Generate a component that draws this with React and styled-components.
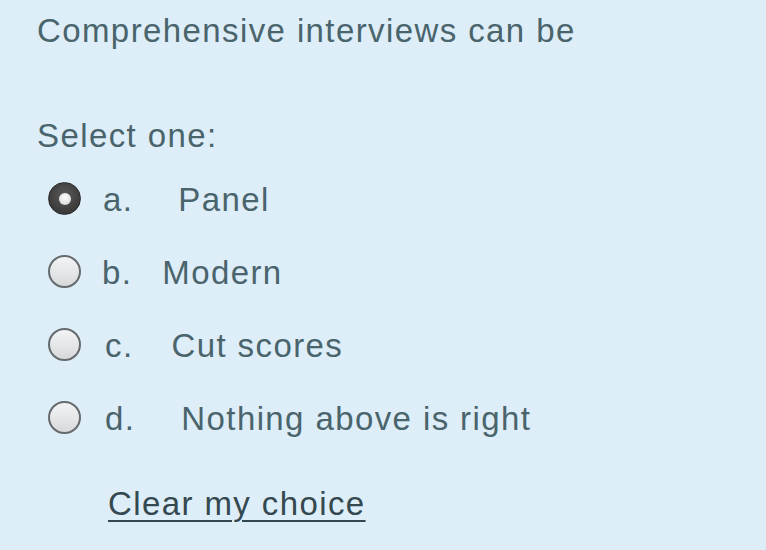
import React from "react";
import styled, { createGlobalStyle } from "styled-components";

const Global = createGlobalStyle`
  html, body { margin: 0; padding: 0; background: #ddeef9; }
  body { font-family: "Liberation Sans", Arial, sans-serif; }
`;

const Panel = styled.div`
  width: 766px;
  height: 550px;
  box-sizing: border-box;
  padding: 13px 0 0 37px;
  background: #ddeef9;
  color: #4a646c;
  font-family: "Liberation Sans", Arial, sans-serif;
  font-size: 33px;
  line-height: 36px;
  letter-spacing: 1.4px;
  overflow: hidden;
`;

const Question = styled.div`
  margin: 0;
`;

const Prompt = styled.div`
  margin-top: 69px;
`;

const Options = styled.div`
  display: flex;
  flex-direction: column;
  gap: 37px;
  margin-top: 28px;
`;

const Row = styled.label`
  display: flex;
  align-items: center;
  height: 36px;
  padding-left: 11px;
`;

const Radio = styled.span`
  flex: none;
  box-sizing: border-box;
  width: 33px;
  height: 33px;
  border-radius: 50%;
  margin-bottom: 3px;
  display: flex;
  align-items: center;
  justify-content: center;
  ${(p) =>
    p.$checked
      ? `
    background: radial-gradient(circle at 50% 40%, #5c5c5c 0%, #3a3a3a 70%, #2e2e2e 100%);
    border: 1px solid #2a2a2a;
  `
      : `
    background: linear-gradient(180deg, #f2f3f4 0%, #e2e4e6 60%, #d6d8da 100%);
    border: 2.5px solid #656a6d;
  `}
`;

const Dot = styled.span`
  width: 12px;
  height: 12px;
  border-radius: 50%;
  background: radial-gradient(circle at 50% 35%, #ffffff 0%, #e4e4e4 60%, #c8c8c8 100%);
`;

const Letter = styled.span`
  margin-left: ${(p) => p.$shift}px;
`;

const Answer = styled.span`
  margin-left: ${(p) => p.$gap}px;
`;

const ClearLink = styled.a`
  display: inline-block;
  margin-top: 49px;
  margin-left: 71px;
  color: #34494f;
  text-decoration: underline;
  text-decoration-thickness: 2px;
  text-underline-offset: 5px;
  cursor: pointer;
`;

const options = [
  { key: "a.", text: "Panel", checked: true, shift: 22, gap: 45 },
  { key: "b.", text: "Modern", checked: false, shift: 21, gap: 30 },
  { key: "c.", text: "Cut scores", checked: false, shift: 24, gap: 38 },
  { key: "d.", text: "Nothing above is right", checked: false, shift: 24, gap: 46 },
];

export default function App() {
  return (
    <>
      <Global />
      <Panel>
        <Question>Comprehensive interviews can be</Question>
        <Prompt>Select one:</Prompt>
        <Options>
          {options.map((o) => (
            <Row key={o.key}>
              <Radio $checked={o.checked}>{o.checked && <Dot />}</Radio>
              <Letter $shift={o.shift}>{o.key}</Letter>
              <Answer $gap={o.gap}>{o.text}</Answer>
            </Row>
          ))}
        </Options>
        <ClearLink>Clear my choice</ClearLink>
      </Panel>
    </>
  );
}
